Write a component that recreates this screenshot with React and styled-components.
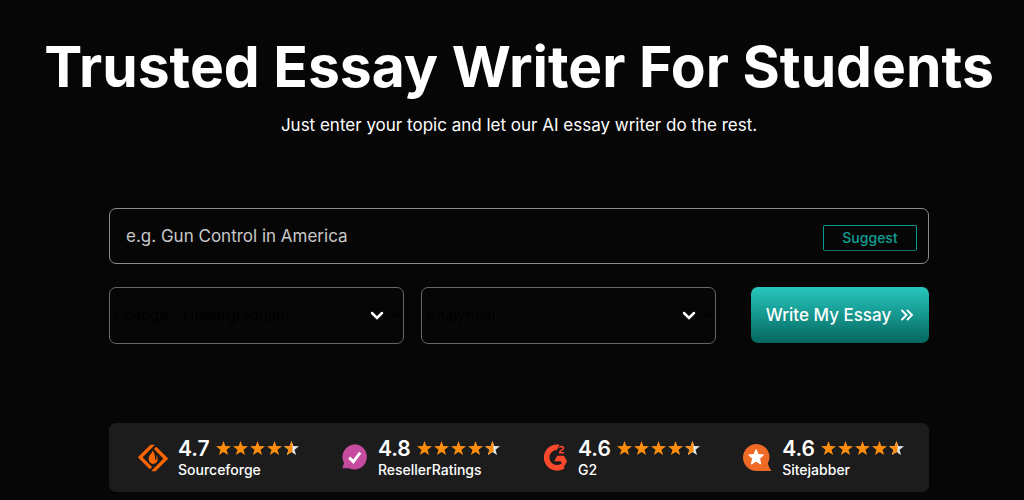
import React from "react";
import styled, { createGlobalStyle } from "styled-components";
import { SiSourceforge } from "react-icons/si";

const GlobalStyle = createGlobalStyle`
  * { box-sizing: border-box; }
  body {
    margin: 0;
    background: #060606;
    color: #fff;
    font-family: Inter, "Liberation Sans", sans-serif;
  }
  button, input, select { font-family: inherit; }
`;

const Page = styled.main`
  display: flex;
  flex-direction: column;
  align-items: center;
  padding: 32px 0 8px 14px;
`;

const Title = styled.h1`
  margin: 0;
  font-size: 57px;
  line-height: 69px;
  font-weight: 700;
  text-align: center;
`;

const Subtitle = styled.p`
  margin: 12px 0 0;
  font-size: 17px;
  line-height: 24px;
  text-align: center;
`;

const Content = styled.div`
  width: 80%;
  min-width: 820px;
  max-width: 960px;
  margin-top: 71px;
`;

const Form = styled.form`
  display: flex;
  flex-direction: column;
  gap: 23px;
`;

const TopicBox = styled.div`
  display: flex;
  align-items: center;
  height: 56px;
  padding: 0 11px 0 16px;
  border: 1px solid #8a8a8a;
  border-radius: 7px;
`;

const TopicInput = styled.input`
  flex: 1;
  min-width: 0;
  padding: 0;
  border: 0;
  outline: 0;
  background: transparent;
  color: #fff;
  font-size: 17px;
  line-height: 24px;
  &::placeholder { color: #c8c8c8; opacity: 1; }
`;

const SuggestButton = styled.button`
  width: 94px;
  height: 26px;
  margin-top: 4px;
  padding: 0 0 2px;
  border: 1px solid #0c9d92;
  border-bottom-color: #0a6c66;
  border-radius: 2px;
  background: transparent;
  color: #0f9f94;
  font-size: 14px;
  font-weight: 500;
`;

const Options = styled.div`
  display: flex;
  align-items: flex-start;
  gap: 17px;
`;

const SelectBox = styled.div`
  position: relative;
  flex: 1;
  display: flex;
`;

const Select = styled.select`
  width: 100%;
  height: 57px;
  border: 1px solid #666;
  border-radius: 7px;
  background: transparent;
  color: #000;
  font-size: 15px;
`;

const SelectArrow = styled.svg`
  position: absolute;
  right: 20px;
  top: 24px;
  width: 14px;
  height: 10px;
  pointer-events: none;
`;

const SubmitButton = styled.button`
  display: flex;
  align-items: center;
  justify-content: center;
  gap: 9px;
  width: 178px;
  height: 56px;
  margin-left: 18px;
  padding: 0;
  border: 0;
  border-radius: 7px;
  background: linear-gradient(#27c8be, #04665f);
  color: #fff;
  font-size: 17px;
  font-weight: 500;
`;

const Ratings = styled.section`
  display: flex;
  align-items: center;
  justify-content: space-between;
  height: 69px;
  margin-top: 79px;
  padding: 0 25px 0 29px;
  border-radius: 7px;
  background: #1c1c1c;
`;

const Rating = styled.article`
  display: flex;
  align-items: center;
  gap: 10px;
  svg { display: block; flex: none; }
`;

const Score = styled.div`
  display: flex;
  align-items: center;
  gap: 6px;
  font-size: 21px;
  line-height: 24px;
  font-weight: 600;
`;

const Stars = styled.div`
  display: flex;
  gap: 2px;
  padding-bottom: 2px;
`;

const Source = styled.div`
  font-size: 14px;
  line-height: 18px;
  font-weight: 500;
`;

const starPath =
  "M7.5 0L9.3 5.1L15 5.3L10.5 8.7L12.1 14L7.5 10.9L2.9 14L4.5 8.7L0 5.3L5.7 5.1Z";

function Star({ half }) {
  return (
    <svg width="15" height="14" viewBox="0 0 15 14" aria-hidden="true">
      <path d={starPath} fill={half ? "#dfe6ec" : "#ff8d0b"} />
      {half && (
        <path
          d="M7.5 0L8.5 2.8V11.6L7.5 10.9L2.9 14L4.5 8.7L0 5.3L5.7 5.1Z"
          fill="#ff8d0b"
        />
      )}
    </svg>
  );
}

function ResellerLogo() {
  return (
    <svg width="26" height="27" viewBox="0 0 26 27" aria-hidden="true">
      <path
        d="M13.2 0.3A12.6 12.6 0 1 1 7 24.3H0.3L2 19A12.6 12.6 0 0 1 13.2 0.3Z"
        fill="#c64a9d"
      />
      <path d="M7.2 13.6L11.3 17.8L18.2 8.6" fill="none" stroke="#fff" strokeWidth="3" />
    </svg>
  );
}

function G2Logo() {
  return (
    <svg width="25" height="27" viewBox="135 120 660 765" aria-hidden="true">
      <g fill="#ff492c">
        <path
          transform="translate(80 -8) scale(.88 .93)"
          d="M716.4 383.1h-110.2c3-17.3 13.7-27 35.4-38l20.3-10.3c36.3-18.6 55.7-39.7 55.7-74.1 0-21.6-8.4-38.7-25.1-51s-36.3-18.4-59.2-18.4c-18.1-.1-35.8 5-51 14.7-15.3 9.5-26.7 21.7-33.9 36.9l31.9 32c12.4-25 30.3-37.3 53.9-37.3 20 0 32.3 10.3 32.3 24.6 0 12-6 21.9-28.9 33.5l-13 6.3c-28.2 14.3-47.8 30.7-59.1 49.3s-16.9 42.1-16.9 70.4v7.7h167.8z"
        />
        <path d="M701.5 451h-183.9l-92 159.2h183.9l92 159.4 92-159.4z" />
        <path d="M506.9 716.2c-117.2 0-212.7-95.4-212.7-212.6s95.5-212.7 212.7-212.7l72.8-152.2c-24.1-4.8-48.4-7.2-72.8-7.1-205.4 0-371.9 166.5-371.9 371.9s166.4 371.9 371.8 371.9c78.6 .2 155.2-24.8 218.6-71.2l-80.5-139.6c-38.4 33.3-87.5 51.6-138 51.6z" />
      </g>
    </svg>
  );
}

function SitejabberLogo() {
  return (
    <svg width="29" height="27" viewBox="0 0 28 27" aria-hidden="true">
      <path
        d="M13 0A13 13 0 0 1 24.4 19.3C25 22 26 24.5 28 27H13A13.3 13.3 0 0 1 13 0Z"
        fill="#ee6a25"
      />
      <path
        d="M12.6 5.6L14.8 10.5L20 11L16.1 14.6L17.3 20L12.6 17.2L7.9 20L9.1 14.6L5.2 11L10.4 10.5Z"
        fill="#fff"
        stroke="#fff"
        strokeLinejoin="round"
      />
    </svg>
  );
}

const ratings = [
  { name: "Sourceforge", score: "4.7", logo: <SiSourceforge size={30} color="#ff6600" /> },
  { name: "ResellerRatings", score: "4.8", logo: <ResellerLogo /> },
  { name: "G2", score: "4.6", logo: <G2Logo /> },
  { name: "Sitejabber", score: "4.6", logo: <SitejabberLogo /> },
];

function Dropdown({ label, options }) {
  return (
    <SelectBox>
      <Select aria-label={label}>
        {options.map((option) => (
          <option key={option}>{option}</option>
        ))}
      </Select>
      <SelectArrow viewBox="0 0 14 10" aria-hidden="true">
        <path d="M2 2L7 7L12 2" fill="none" stroke="#fff" strokeWidth="2.5" strokeLinecap="round" />
      </SelectArrow>
    </SelectBox>
  );
}

export default function App() {
  return (
    <>
      <GlobalStyle />
      <Page>
        <Title>Trusted Essay Writer For Students</Title>
        <Subtitle>Just enter your topic and let our AI essay writer do the rest.</Subtitle>
        <Content>
          <Form onSubmit={(event) => event.preventDefault()}>
            <TopicBox>
              <TopicInput aria-label="Essay topic" placeholder="e.g. Gun Control in America" />
              <SuggestButton type="button">Suggest</SuggestButton>
            </TopicBox>
            <Options>
              <Dropdown label="Academic level" options={["College - Undergraduate"]} />
              <Dropdown label="Essay type" options={["Analytical"]} />
              <SubmitButton type="submit">
                Write My Essay
                <svg width="14" height="12" viewBox="0 0 14 12" aria-hidden="true">
                  <path
                    d="M2 1.5L6.5 6L2 10.5M7.5 1.5L12 6L7.5 10.5"
                    fill="none"
                    stroke="#fff"
                    strokeWidth="1.9"
                    strokeLinecap="round"
                  />
                </svg>
              </SubmitButton>
            </Options>
          </Form>
          <Ratings aria-label="Ratings">
            {ratings.map(({ name, score, logo }) => (
              <Rating key={name}>
                {logo}
                <div>
                  <Score>
                    {score}
                    <Stars>
                      {[0, 1, 2, 3, 4].map((i) => (
                        <Star key={i} half={i === 4} />
                      ))}
                    </Stars>
                  </Score>
                  <Source>{name}</Source>
                </div>
              </Rating>
            ))}
          </Ratings>
        </Content>
      </Page>
    </>
  );
}
